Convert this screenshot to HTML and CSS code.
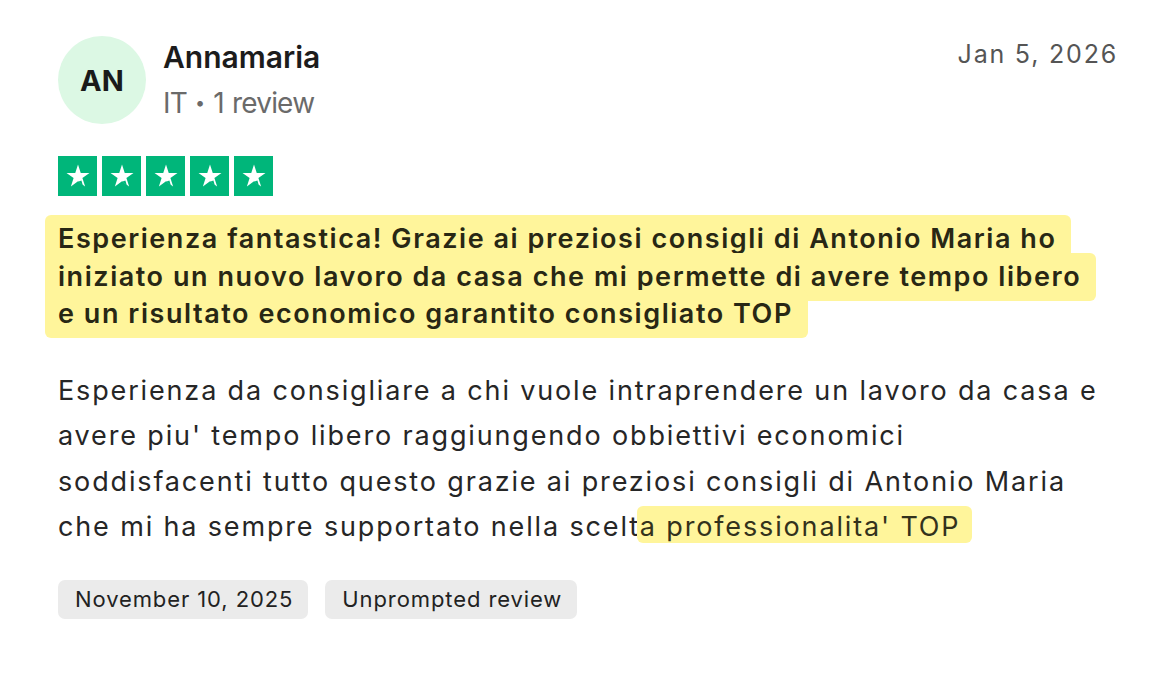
FILE: index.html
```html
<!DOCTYPE html>
<html lang="it">
<head>
<meta charset="utf-8">
<title>Review</title>
<link rel="stylesheet" href="styles.css">
</head>
<body>
<article class="review">
  <header class="head">
    <div class="avatar">AN</div>
    <div class="who">
      <div class="name">Annamaria</div>
      <div class="meta">IT <span class="dot">•</span> 1 review</div>
    </div>
    <div class="date">Jan 5, 2026</div>
  </header>
  <div class="stars">
    <span class="star"><svg viewBox="0 0 24 24"><path d="M12 2.2l2.35 7.15h7.5l-6.07 4.4 2.32 7.15L12 16.5l-6.1 4.4 2.33-7.15L2.15 9.35h7.5z" fill="#fff"/><path d="M14.9 15.9l1.2 3.9L12 16.9z" fill="#00b67a"/></svg></span>
    <span class="star"><svg viewBox="0 0 24 24"><path d="M12 2.2l2.35 7.15h7.5l-6.07 4.4 2.32 7.15L12 16.5l-6.1 4.4 2.33-7.15L2.15 9.35h7.5z" fill="#fff"/><path d="M14.9 15.9l1.2 3.9L12 16.9z" fill="#00b67a"/></svg></span>
    <span class="star"><svg viewBox="0 0 24 24"><path d="M12 2.2l2.35 7.15h7.5l-6.07 4.4 2.32 7.15L12 16.5l-6.1 4.4 2.33-7.15L2.15 9.35h7.5z" fill="#fff"/><path d="M14.9 15.9l1.2 3.9L12 16.9z" fill="#00b67a"/></svg></span>
    <span class="star"><svg viewBox="0 0 24 24"><path d="M12 2.2l2.35 7.15h7.5l-6.07 4.4 2.32 7.15L12 16.5l-6.1 4.4 2.33-7.15L2.15 9.35h7.5z" fill="#fff"/><path d="M14.9 15.9l1.2 3.9L12 16.9z" fill="#00b67a"/></svg></span>
    <span class="star"><svg viewBox="0 0 24 24"><path d="M12 2.2l2.35 7.15h7.5l-6.07 4.4 2.32 7.15L12 16.5l-6.1 4.4 2.33-7.15L2.15 9.35h7.5z" fill="#fff"/><path d="M14.9 15.9l1.2 3.9L12 16.9z" fill="#00b67a"/></svg></span>
  </div>
  <h2 class="title"><span class="mark">Esperienza fantastica! Grazie ai preziosi consigli di Antonio Maria ho<br>iniziato un nuovo lavoro da casa che mi permette di avere tempo libero<br>e un risultato economico garantito consigliato TOP</span></h2>
  <p class="body">Esperienza da consigliare a chi vuole intraprendere un lavoro da casa e<br>avere piu' tempo libero raggiungendo obbiettivi economici<br>soddisfacenti tutto questo grazie ai preziosi consigli di Antonio Maria<br>che mi ha sempre supportato nella scelt<span class="mark mark-sm">a professionalita' TOP</span></p>
  <div class="tags">
    <span class="tag">November 10, 2025</span>
    <span class="tag">Unprompted review</span>
  </div>
</article>
</body>
</html>
```
FILE: styles.css
```css
html, body {
  margin: 0;
  background: #ffffff;
}
body {
  font-family: Inter, "Liberation Sans", Arial, sans-serif;
  color: #1c1c1c;
}
.review {
  padding: 36px 50px 0 58px;
}
.head {
  display: flex;
  align-items: flex-start;
}
.avatar {
  width: 88px;
  height: 88px;
  border-radius: 50%;
  background: #dcf8e4;
  display: flex;
  align-items: center;
  justify-content: center;
  font-size: 29px;
  font-weight: 700;
  color: #1a1a1a;
  flex: none;
}
.who {
  margin-left: 17px;
  flex: 1;
}
.name {
  font-size: 30px;
  font-weight: 600;
  line-height: 36px;
  margin-top: 3px;
  color: #1c1c1c;
}
.meta {
  font-size: 28px;
  line-height: 34px;
  margin-top: 11px;
  letter-spacing: -0.8px;
  word-spacing: 1px;
  color: #6a6a6a;
}
.dot {
  font-size: 18px;
  vertical-align: 4px;
  letter-spacing: 0;
}
.date {
  font-size: 25px;
  line-height: 30px;
  color: #555555;
  margin-top: 3px;
  letter-spacing: 1.8px;
}
.stars {
  display: flex;
  gap: 5px;
  margin-top: 32px;
}
.star {
  width: 39px;
  height: 40px;
  background: #00b67a;
  display: flex;
  align-items: center;
  justify-content: center;
}
.star svg {
  width: 28px;
  height: 28px;
}
.title {
  margin: 24px 0 0 0;
  font-size: 27px;
  font-weight: 600;
  line-height: 37.5px;
  letter-spacing: 1.55px;
  white-space: nowrap;
  color: #282714;
}
.mark {
  background: #fff59b;
  padding: 7px 15px 8px 13px;
  margin: 0 -15px 0 -13px;
  border-radius: 6px;
  -webkit-box-decoration-break: clone;
  box-decoration-break: clone;
}
.body {
  margin: 35px 0 0 0;
  font-size: 27px;
  line-height: 45.5px;
  letter-spacing: 1.85px;
  white-space: nowrap;
  color: #262626;
}
.mark-sm {
  color: #33321c;
  padding: 4px 12px 0 3px;
  margin: 0 -12px 0 -3px;
}
.tags {
  display: flex;
  gap: 17px;
  margin-top: 30px;
}
.tag {
  background: #ebebeb;
  border-radius: 7px;
  font-size: 22px;
  line-height: 39px;
  letter-spacing: 0.9px;
  padding: 0 15px 0 17px;
  color: #222;
}
```
